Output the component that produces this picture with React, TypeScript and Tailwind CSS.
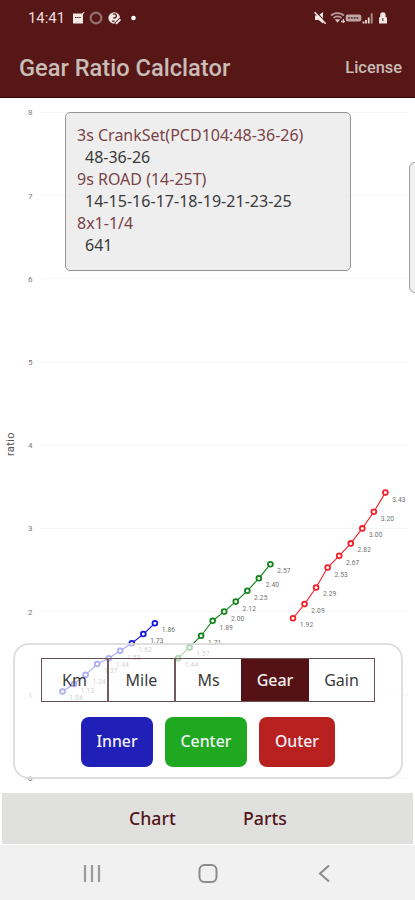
const NOTO = "font-['Noto_Sans','Open_Sans',sans-serif]";

type Series = { name: string; color: string; x: number; values: string[] };

const series: Series[] = [
  { name: "inner", color: "#1414e6", x: 62.5, values: ["1.04", "1.13", "1.24", "1.37", "1.44", "1.53", "1.62", "1.73", "1.86"] },
  { name: "center", color: "#12831a", x: 178, values: ["1.44", "1.57", "1.71", "1.89", "2.00", "2.12", "2.25", "2.40", "2.57"] },
  { name: "outer", color: "#f3202a", x: 293, values: ["1.92", "2.09", "2.29", "2.53", "2.67", "2.82", "3.00", "3.20", "3.43"] },
];

const STEP = 11.55;
const TOP = 98;
const yOf = (v: number) => 778 - 83.2 * v - TOP;

function Chart() {
  return (
    <svg width="415" height="695" viewBox="0 0 415 695" className="block font-['Roboto',sans-serif]">
      {[0, 1, 2, 3, 4, 5, 6, 7, 8].map((n) => (
        <g key={n}>
          <line x1="41" x2="409" y1={yOf(n)} y2={yOf(n)} stroke="#f4f4f4" />
          <text x="30.3" y={yOf(n) + 3} fontSize="8" textAnchor="middle" fill="#777">{n}</text>
        </g>
      ))}
      <text transform="translate(14.3 358) rotate(-90)" fontSize="11" fill="#555" textLength="23.5">ratio</text>
      {series.map((s) => (
        <g key={s.name}>
          <polyline
            points={s.values.map((v, i) => `${s.x + i * STEP},${yOf(+v)}`).join(" ")}
            fill="none"
            stroke={s.color}
            strokeWidth="1.1"
          />
          {s.values.map((v, i) => (
            <g key={i}>
              <circle cx={s.x + i * STEP} cy={yOf(+v)} r="2.4" fill="#fff" stroke={s.color} strokeWidth="1.8" />
              <text x={s.x + i * STEP + 6.8} y={yOf(+v) + 9} fontSize="6.6" fill="#707070" textLength="13.3">{v}</text>
            </g>
          ))}
        </g>
      ))}
    </svg>
  );
}

function StatusBar() {
  return (
    <div className="flex h-[36px] items-center pl-[28px] pr-[26px] font-['Roboto',sans-serif] text-[#e9dcd9]">
      <span className="w-[37px] whitespace-nowrap text-[14.9px] leading-none">14:41</span>
      <svg width="66" height="16" viewBox="0 0 66 16" className="ml-[6px]">
        <path d="M2 3.5h9l2-1.8.6.7-1.6 1.6v9.5H2z" fill="#f1e8e6" />
        <path d="M4 7.5h6" stroke="#581717" strokeWidth="1.2" strokeDasharray="1.5 .6" />
        <circle cx="25" cy="8" r="5.4" fill="none" stroke="#94706c" strokeWidth="2.2" />
        <circle cx="43.2" cy="8" r="5.8" fill="#f1e8e6" />
        <path d="M42 4.4a2 2 0 1 1 1 3.4v1M41 11.2h2.5" stroke="#581717" strokeWidth="1.3" fill="none" />
        <path d="M43.5 13.6l5.5-5.4" stroke="#581717" strokeWidth="1.2" />
        <path d="M45 13.8l4.5-4.5" stroke="#f1e8e6" strokeWidth="1.8" />
        <circle cx="62.5" cy="8" r="2.3" fill="#fff" />
      </svg>
      <svg width="76" height="16" viewBox="0 0 76 16" className="ml-auto">
        <path d="M2 5.5h3.5L10 2v11.5L5.5 10H2z" fill="#f1e8e6" />
        <path d="M2.4 1.2l11 11.6" stroke="#581717" strokeWidth="1.2" />
        <path d="M1.6 2.2l11 11.6" stroke="#f1e8e6" strokeWidth="1.6" />
        <path d="M18.2 5.6C21 2.3 27.8 2.3 30.8 5.6M20.6 8c2-2.1 6-2.1 8 0" stroke="#b99f9b" strokeWidth="1.8" fill="none" />
        <path d="M21.8 9.2h5.4l-2.7 3.5z" fill="#d5c4c1" />
        <path d="M28 11.5h4M30.4 9v4" stroke="#d5c4c1" strokeWidth="1.3" />
        <rect x="32.7" y="4.4" width="15.6" height="7" rx="2" fill="#bda6a2" />
        <path d="M35 8h11" stroke="#765050" strokeWidth="1.8" strokeDasharray="2 .8" />
        <path d="M50.5 13.5v-2M53 13.5V10M55.7 13.5V7.4" stroke="#e9dcd9" strokeWidth="1.8" />
        <path d="M58.7 13.5V3.3" stroke="#a58985" strokeWidth="2" />
        <path d="M66 7.2h1.2V5a2.7 2.7 0 0 1 5.4 0v2.2H74v6.3h-8z" fill="#f1e8e6" />
        <path d="M69.8 8v3" stroke="#806060" strokeWidth="1.5" />
      </svg>
    </div>
  );
}

function InfoCard() {
  return (
    <div className={`absolute left-[65px] top-[14px] h-[159px] w-[286px] whitespace-pre rounded-[5px] border border-[#959595] bg-[#e8e8e8]/75 pl-[11px] pt-[11px] text-[16px] leading-[22px] text-[#3a3a3a] ${NOTO}`}>
      <div className="text-[#7a4347]">3s CrankSet(PCD104:48-36-26)</div>
      <div className="pl-2">48-36-26</div>
      <div className="text-[#7a4347]">9s ROAD (14-25T)</div>
      <div className="pl-2 tracking-[0.03px]">14-15-16-17-18-19-21-23-25</div>
      <div className="text-[#7a4347]">8x1-1/4</div>
      <div className="pl-2">641</div>
    </div>
  );
}

function Controls() {
  return (
    <div className={`absolute left-[13px] top-[545px] h-[136px] w-[390px] rounded-[16px] border-2 border-[#d0d0d0]/70 bg-white/65 ${NOTO}`}>
      <div className="ml-[26px] mt-[13px] flex h-[44px] w-[334px] border border-[#665052] text-[16px] text-[#3a3a3a]">
        <div className="flex w-[67px] items-center justify-center border-r-2 border-[#745a5d]">Km</div>
        <div className="flex w-[67px] items-center justify-center border-r-2 border-[#745a5d]">Mile</div>
        <div className="flex w-[65px] items-center justify-center">Ms</div>
        <div className="flex w-[68px] items-center justify-center bg-[#551215] font-medium text-[#f4eeee]">Gear</div>
        <div className="flex flex-1 items-center justify-center">Gain</div>
      </div>
      <div className="ml-[66px] mt-[15px] flex h-[50px] text-[15.8px] font-medium text-[#f2f2fa]">
        <button className="mr-[12px] w-[72px] rounded-[8px] bg-[#201fb8]">Inner</button>
        <button className="mr-[12px] w-[82px] rounded-[8px] bg-[#20a820]">Center</button>
        <button className="w-[76px] rounded-[8px] bg-[#b92020]">Outer</button>
      </div>
    </div>
  );
}

export default function App() {
  return (
    <div className="flex h-[900px] w-[415px] flex-col overflow-hidden bg-white">
      <header className="h-[98px] shrink-0 border-b border-[#320808] bg-[#581717]">
        <StatusBar />
        <div className="flex h-[64px] items-center justify-between pl-[19px] pr-[13px] font-['Roboto',sans-serif] font-medium text-[#c8bdb7]">
          <h1 className="pt-px text-[23.65px] leading-none">Gear Ratio Calclator</h1>
          <span className="pt-px text-[16.4px] leading-none">License</span>
        </div>
      </header>
      <main className="relative h-[695px] shrink-0 overflow-hidden">
        <Chart />
        <InfoCard />
        <div className="absolute left-[409px] top-[64px] h-[131px] w-[30px] rounded-[6px] border border-[#a0a0a0] bg-[#f0f0f0]" />
        <Controls />
      </main>
      <div className={`mx-[2px] flex h-[51px] shrink-0 items-center bg-[#e0e0df] text-[17.7px] font-medium leading-none text-[#521619] ${NOTO}`}>
        <span className="ml-[127px] w-[114px]">Chart</span>
        <span>Parts</span>
      </div>
      <nav className="mt-px flex h-[55px] shrink-0 items-center bg-[#f1f1f1]">
        <svg width="415" height="55" viewBox="0 0 415 55" fill="none" stroke="#8c8c8c" strokeWidth="2">
          <path d="M85 20v17M92 20v17M99 20v17" stroke="#9a9a9a" strokeWidth="2.2" />
          <rect x="199.5" y="20" width="17" height="17" rx="5" />
          <path d="M329 20.5l-9 8 9 8" />
        </svg>
      </nav>
    </div>
  );
}
